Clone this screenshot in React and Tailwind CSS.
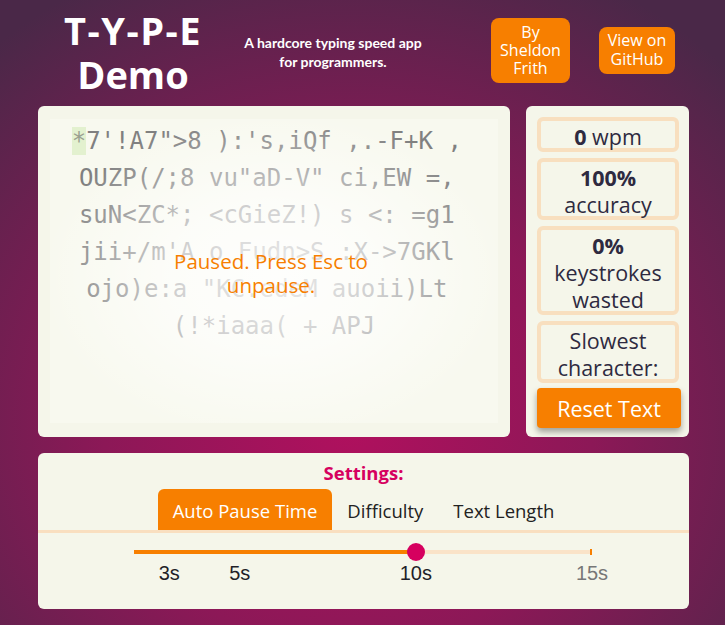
const UI = { fontFamily: '"Open Sans", "Noto Sans", sans-serif' };
const LATO = { fontFamily: 'Lato, "Open Sans", sans-serif' };
const MONO = { fontFamily: '"DejaVu Sans Mono", "Liberation Mono", monospace' };
const ARIAL = { fontFamily: '"Liberation Sans", Arial, sans-serif' };

const LINES = [
  `7'!A7">8 ):'s,iQf ,.-F+K , `,
  `OUZP(/;8 vu"aD-V" ci,EW =, `,
  `suN<ZC*; <cGieZ!) s <: =g1 `,
  `jii+/m'A o Fudn>S :X->7GKl `,
  `ojo)e:a "KC.edeM auoii)Lt `,
  `(!*iaaa( + APJ`,
];

const MARKS = [
  { v: 3, label: "3s" },
  { v: 5, label: "5s" },
  { v: 10, label: "10s" },
  { v: 15, label: "15s", muted: true },
];
const MIN = 2;
const MAX = 15;
const pct = (v) => ((v - MIN) / (MAX - MIN)) * 100;

export default function App() {
  return (
    <div
      className="min-h-screen w-full bg-[radial-gradient(ellipse_75%_80%_at_48%_68%,#b0105e_0%,#8c1857_45%,#4a2848_100%)]"
      style={UI}
    >
      <Header />

      <div className="flex ml-[38px] mt-[6px] gap-4">
        <TextCard />
        <Stats />
      </div>

      <Settings />
    </div>
  );
}

function Header() {
  return (
    <div className="flex items-center h-[100px] text-white">
      <div className="ml-[38px] w-[190px] text-center font-bold text-[38px] leading-[44px] mt-[4px]">
        <div className="tracking-[1.5px]">T-Y-P-E</div>
        <div>Demo</div>
      </div>
      <div className="w-[210px] text-center font-bold text-[14px] leading-[19px] mt-[4px]" style={LATO}>
        A hardcore typing speed app
        <br />
        for programmers.
      </div>
      <a className="ml-[53px] w-[79px] h-[65px] rounded-lg bg-[#f77f00] flex flex-col items-center justify-center text-[16px] leading-[18px] text-white">
        <span>By</span>
        <span>Sheldon</span>
        <span>Frith</span>
      </a>
      <a className="ml-[29px] w-[76px] h-[47px] rounded-lg bg-[#f77f00] flex flex-col items-center justify-center text-[16px] leading-[19px] text-white">
        <span>View on</span>
        <span>GitHub</span>
      </a>
    </div>
  );
}

function TextCard() {
  return (
    <div className="w-[472px] h-[331px] rounded-md bg-[#f5f6ea] pt-[13px] pl-[12px] pr-[12px]">
      <div className="relative w-[448px] h-[304px] bg-[#f8f9ef] overflow-hidden">
        <div className="pt-[4px] text-[24px] leading-[37px] text-[#808080] text-center" style={MONO}>
          {LINES.map((l, i) => (
            <div key={i} className="whitespace-pre">
              {i === 0 && <span className="bg-[#e3f1cf] text-[#9aa090]">*</span>}
              {l}
            </div>
          ))}
        </div>
        {/* paused fade over the text */}
        <div className="absolute inset-0 bg-[radial-gradient(ellipse_52%_55%_at_50%_52%,rgba(255,255,255,0.85)_0%,rgba(255,255,255,0.62)_45%,rgba(255,255,255,0)_100%)]" />
        <div className="absolute inset-0 flex items-center justify-center">
          <p className="w-[220px] text-center text-[20.5px] leading-[24px] text-[#f77f00] mt-[4px] -ml-[6px]">
            Paused. Press Esc to unpause.
          </p>
        </div>
      </div>
    </div>
  );
}

function StatBox({ h, children }) {
  return (
    <div
      className="w-[142px] rounded-md border-4 border-[#f8dfbf] flex flex-col items-center justify-center pt-[3px] text-[21.5px] leading-[27px] text-[#2e2a40]"
      style={{ height: h }}
    >
      {children}
    </div>
  );
}

function Stats() {
  return (
    <div className="w-[163px] h-[331px] rounded-md bg-[#f5f6ea] pt-[11px] pl-[11px] flex flex-col gap-[6px]">
      <StatBox h={35}>
        <div>
          <b className="font-bold">0</b> wpm
        </div>
      </StatBox>
      <StatBox h={62}>
        <b className="font-bold">100%</b>
        <span>accuracy</span>
      </StatBox>
      <StatBox h={89}>
        <b className="font-bold">0%</b>
        <span>keystrokes</span>
        <span>wasted</span>
      </StatBox>
      <StatBox h={62}>
        <span>Slowest</span>
        <span>character:</span>
      </StatBox>
      <button className="w-[144px] h-[40px] -mt-[1px] pt-[3px] bg-[#f77f00] text-white text-[21.5px] rounded-sm shadow-[0_4px_6px_rgba(0,0,0,0.35)]">
        Reset Text
      </button>
    </div>
  );
}

function Settings() {
  const value = 10;
  return (
    <div className="ml-[38px] mt-4 w-[651px] h-[156px] rounded-md bg-[#f5f6ea] pt-[8px]">
      <div className="text-center font-bold text-[18.5px] leading-[24px] text-[#d6005f]">Settings:</div>
      <div className="mt-[4px] flex justify-center border-b-[3px] border-[#f9dfc0]">
        <div className="h-[41px] px-[15px] pt-[2px] rounded-t-md bg-[#f77f00] text-white text-[18.5px] flex items-center">
          Auto Pause Time
        </div>
        <div className="h-[41px] px-[15px] pt-[2px] text-[#222] text-[18.5px] flex items-center">Difficulty</div>
        <div className="h-[41px] px-[15px] pt-[2px] text-[#222] text-[18.5px] flex items-center">Text Length</div>
      </div>

      <div className="relative ml-[96px] mt-[17px] w-[458px] h-[4px] bg-[#fae3c8]">
        <div className="absolute left-0 top-0 h-full bg-[#f77f00]" style={{ width: `${pct(value)}%` }} />
        <div className="absolute right-0 -top-[1px] w-[2px] h-[6px] bg-[#f77f00]" />
        <div
          className="absolute -top-[7px] w-[18px] h-[18px] -ml-[9px] rounded-full bg-[#d6005f]"
          style={{ left: `${pct(value)}%` }}
        />
        {MARKS.map((m) => (
          <span
            key={m.v}
            className={`absolute top-[12px] -translate-x-1/2 text-[20px] leading-[22px] ${m.muted ? "text-[#777]" : "text-[#1f1f28]"}`}
            style={{ ...ARIAL, left: `${pct(m.v)}%` }}
          >
            {m.label}
          </span>
        ))}
      </div>
    </div>
  );
}
